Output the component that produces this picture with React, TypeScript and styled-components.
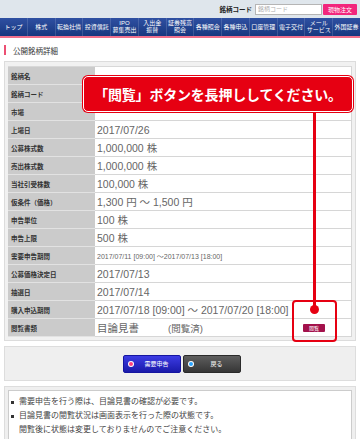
import React from 'react';
import styled, { createGlobalStyle } from 'styled-components';

const GlobalStyle = createGlobalStyle`
  html, body {
    margin: 0;
    padding: 0;
    background: #ffffff;
  }
  body {
    font-family: 'Liberation Sans', 'Noto Sans CJK JP', sans-serif;
    color: #333333;
  }
`;

const Page = styled.div`
  position: relative;
  width: 360px;
  height: 439px;
  overflow: hidden;
`;

const TopBar = styled.div`
  height: 18px;
  background: #dfe6ec;
  display: flex;
  align-items: center;
  justify-content: flex-end;
  padding-right: 3px;
`;

const CodeLabel = styled.span`
  font-size: 6.5px;
  font-weight: 700;
  color: #222222;
  margin-right: 3px;
`;

const CodeInput = styled.input`
  box-sizing: border-box;
  width: 67px;
  height: 11px;
  border: 1px solid #b5b5b5;
  padding: 0 2px;
  font-size: 6px;
  font-family: inherit;
  outline: none;
  &::placeholder {
    color: #b0b0b0;
  }
`;

const OrderButton = styled.button`
  width: 34px;
  height: 11px;
  margin-left: 1px;
  border: none;
  border-radius: 1px;
  padding: 0;
  background: #f2267c;
  color: #ffffff;
  font-size: 6px;
  font-family: inherit;
`;

const Nav = styled.nav`
  display: flex;
  height: 18px;
  background: linear-gradient(#2f50a2, #17377f);
  border-bottom: 2.5px solid #f0708c;
`;

const NavItem = styled.div`
  flex: 1;
  display: flex;
  flex-direction: column;
  align-items: center;
  justify-content: center;
  border-right: 1px solid rgba(255, 255, 255, 0.14);
  color: #ffffff;
  font-size: 6px;
  line-height: 7px;
  white-space: nowrap;
  &:last-child {
    border-right: none;
  }
`;

const Heading = styled.h2`
  margin: 7px 0 6px 4px;
  height: 10px;
  display: flex;
  align-items: center;
  border-left: 2.5px solid #ec4f73;
  padding-left: 7px;
  font-size: 7.5px;
  font-weight: 400;
  color: #333333;
`;

const Panel = styled.section`
  margin: 0 4px;
  border: 1px solid #dcdcdc;
  background: #f1f1f1;
  padding: 4px 3px 3px 3px;
`;

const Table = styled.div`
  border-top: 1px solid #d8d8d8;
  background: #ffffff;
`;

const Row = styled.div`
  display: grid;
  grid-template-columns: 87px 1fr;
  height: 18px;
`;

const Label = styled.div`
  display: flex;
  align-items: center;
  padding-left: 3px;
  background: #cbcbcb;
  border-bottom: 1px solid #e2e2e2;
  font-size: 6.5px;
  font-weight: 700;
  color: #333333;
`;

const Value = styled.div<{ $small?: boolean }>`
  display: flex;
  align-items: center;
  padding-left: 2px;
  border-bottom: 1px solid #d6d6d6;
  border-right: 1px solid #d6d6d6;
  font-size: ${p => (p.$small ? '7px' : '10.5px')};
  color: #666666;
  white-space: nowrap;
`;

const DocName = styled.span`
  width: 71px;
`;

const DocStatus = styled.span`
  font-size: 9.5px;
  flex: 1;
`;

const ViewButton = styled.button`
  width: 22px;
  height: 8px;
  margin: 0 26px 0 0;
  padding: 0;
  border: none;
  border-radius: 1px;
  background: #a3114b;
  color: #ffffff;
  font-size: 5px;
  font-family: inherit;
  line-height: 8px;
`;

const ButtonPanel = styled.div`
  margin: 5px 4px 0 4px;
  height: 35px;
  box-sizing: border-box;
  border: 1px solid #dddddd;
  background: #efefef;
  display: flex;
  justify-content: center;
  align-items: center;
  gap: 2px;
`;

const ActionButton = styled.button<{ $variant: 'blue' | 'grey' }>`
  position: relative;
  width: 58px;
  height: 18px;
  padding: 0 0 0 10px;
  border: 1px solid ${p => (p.$variant === 'blue' ? '#1515a0' : '#2a2a2a')};
  border-radius: 2px;
  background: ${p =>
    p.$variant === 'blue'
      ? 'linear-gradient(#3c3ce4, #1a1aaa)'
      : 'linear-gradient(#5e5e5e, #363636)'};
  color: #ffffff;
  font-size: 6px;
  font-family: inherit;
  display: flex;
  align-items: center;
  justify-content: center;
  margin-left: ${p => (p.$variant === 'blue' ? '3px' : '0')};
`;

const Dot = styled.span<{ $color: string }>`
  position: absolute;
  left: 5px;
  top: 50%;
  width: 4px;
  height: 4px;
  margin-top: -2px;
  border-radius: 50%;
  background: ${p => p.$color};
  box-shadow: 0 0 0 1px #ffffff;
`;

const NotesPanel = styled.div`
  margin: 5px 4px 0 4px;
  border: 1px solid #dddddd;
  border-bottom: none;
  background: #efefef;
  padding: 3px 3px 0 3px;
`;

const NotesBox = styled.ul`
  margin: 0;
  padding: 4px 0 5px 0;
  list-style: none;
  background: #ffffff;
  border: 1px solid #cccccc;
`;

const Note = styled.li<{ $plain?: boolean }>`
  position: relative;
  padding-left: 10px;
  font-size: 8px;
  line-height: 14px;
  color: #444444;
  &::before {
    content: '';
    display: ${p => (p.$plain ? 'none' : 'block')};
    position: absolute;
    left: 2px;
    top: 6px;
    width: 2.5px;
    height: 2.5px;
    background: #333333;
  }
`;

const Callout = styled.div`
  position: absolute;
  left: 83px;
  top: 76px;
  width: 270px;
  height: 36px;
  box-sizing: border-box;
  border-radius: 5px;
  border: 1.5px solid #ffffff;
  background: #e60012;
  box-shadow: 0 0 0 1px #e60012;
  display: flex;
  align-items: center;
  justify-content: center;
  color: #ffffff;
  font-family: 'Noto Sans CJK JP', sans-serif;
  font-weight: 700;
  font-size: 14px;
  letter-spacing: -0.2px;
`;

const Leader = styled.div`
  position: absolute;
  left: 313px;
  top: 112px;
  width: 2.5px;
  height: 198px;
  background: #e60012;
`;

const LeaderDot = styled.div`
  position: absolute;
  left: 310px;
  top: 305px;
  width: 9px;
  height: 9px;
  border-radius: 50%;
  background: #e60012;
`;

const Highlight = styled.div`
  position: absolute;
  left: 292px;
  top: 300px;
  width: 45px;
  height: 42px;
  box-sizing: border-box;
  border: 2px solid #e60012;
  border-radius: 4px;
`;

const navItems: string[][] = [
  ['トップ'],
  ['株式'],
  ['転換社債'],
  ['投資信託'],
  ['IPO', '募集売出'],
  ['入出金', '振替'],
  ['証券残高', '照会'],
  ['各種照会'],
  ['各種申込'],
  ['口座管理'],
  ['電子交付'],
  ['メール', 'サービス'],
  ['外国証券'],
];

const rows: { label: string; value: string; small?: boolean }[] = [
  { label: '銘柄名', value: '' },
  { label: '銘柄コード', value: '' },
  { label: '市場', value: '' },
  { label: '上場日', value: '2017/07/26' },
  { label: '公募株式数', value: '1,000,000 株' },
  { label: '売出株式数', value: '1,000,000 株' },
  { label: '当社引受株数', value: '100,000 株' },
  { label: '仮条件（価格）', value: '1,300 円 〜 1,500 円' },
  { label: '申告単位', value: '100 株' },
  { label: '申告上限', value: '500 株' },
  { label: '需要申告期間', value: '2017/07/11 [09:00] 〜2017/07/13 [18:00]', small: true },
  { label: '公募価格決定日', value: '2017/07/13' },
  { label: '抽選日', value: '2017/07/14' },
  { label: '購入申込期間', value: '2017/07/18 [09:00] 〜 2017/07/20 [18:00]' },
];

export default function App() {
  return (
    <Page>
      <GlobalStyle />
      <TopBar>
        <CodeLabel>銘柄コード</CodeLabel>
        <CodeInput placeholder="銘柄コード" />
        <OrderButton>現物注文</OrderButton>
      </TopBar>
      <Nav>
        {navItems.map(lines => (
          <NavItem key={lines.join('')}>
            {lines.map(l => (
              <span key={l}>{l}</span>
            ))}
          </NavItem>
        ))}
      </Nav>

      <Heading>公開銘柄詳細</Heading>

      <Panel>
        <Table>
          {rows.map(r => (
            <Row key={r.label}>
              <Label>{r.label}</Label>
              <Value $small={r.small}>{r.value}</Value>
            </Row>
          ))}
          <Row>
            <Label>閲覧書類</Label>
            <Value>
              <DocName>目論見書</DocName>
              <DocStatus>(閲覧済)</DocStatus>
              <ViewButton>閲覧</ViewButton>
            </Value>
          </Row>
        </Table>
      </Panel>

      <ButtonPanel>
        <ActionButton $variant="blue">
          <Dot $color="#ff3f7f" />
          需要申告
        </ActionButton>
        <ActionButton $variant="grey">
          <Dot $color="#2aa4ff" />
          戻る
        </ActionButton>
      </ButtonPanel>

      <NotesPanel>
        <NotesBox>
          <Note>需要申告を行う際は、目論見書の確認が必要です。</Note>
          <Note>目論見書の閲覧状況は画面表示を行った際の状態です。</Note>
          <Note $plain>閲覧後に状態は変更しておりませんのでご注意ください。</Note>
        </NotesBox>
      </NotesPanel>

      <Callout>「閲覧」ボタンを長押ししてください。</Callout>
      <Leader />
      <LeaderDot />
      <Highlight />
    </Page>
  );
}
